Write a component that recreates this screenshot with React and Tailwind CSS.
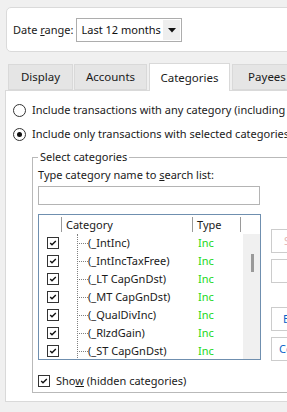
const rows = [
  '(_IntInc)',
  '(_IntIncTaxFree)',
  '(_LT CapGnDst)',
  '(_MT CapGnDst)',
  '(_QualDivInc)',
  '(_RlzdGain)',
  '(_ST CapGnDst)',
]

function Check({ checked = true }) {
  return (
    <span className="w-[12px] h-[12px] border border-[#333333] bg-white flex items-center justify-center shrink-0">
      {checked && (
        <svg width="8" height="8" viewBox="0 0 8 8">
          <path d="M1.2 4 L3 5.8 L6.8 2" fill="none" stroke="#111" strokeWidth="1.4" />
        </svg>
      )}
    </span>
  )
}

function Radio({ checked }) {
  return (
    <span className="w-[13px] h-[13px] rounded-full border border-[#333333] bg-white flex items-center justify-center shrink-0">
      {checked && <span className="w-[5px] h-[5px] rounded-full bg-[#111]" />}
    </span>
  )
}

function Tab({ label, width, active, gap = 0 }) {
  return active ? (
    <div
      className="h-[28px] -mb-px bg-white border border-b-0 border-[#d9d9d9] flex items-center justify-center relative z-10 shrink-0"
      style={{ width, marginLeft: gap }}
    >
      {label}
    </div>
  ) : (
    <div
      className="h-[26px] bg-[#e5e5e5] border border-[#d9d9d9] flex items-center justify-center shrink-0"
      style={{ width, marginLeft: gap }}
    >
      {label}
    </div>
  )
}

export default function App() {
  return (
    <div
      className="w-[287px] h-[412px] bg-[#f0f0f0] overflow-hidden text-[11px] text-[#1a1a1a] leading-[16px] whitespace-nowrap"
      style={{ fontFamily: '"Noto Sans", "Open Sans", sans-serif' }}
    >
      {/* date range */}
      <div className="ml-[6px] mt-[7px] w-[300px] h-[45px] bg-white border border-[#dadada] rounded-[5px] flex items-center pl-[6px]">
        <span>
          Date <u>r</u>ange:
        </span>
        <div className="ml-[3px] w-[106px] h-[24px] border border-[#adadad] flex items-center justify-between pl-[4px] pr-[1px] mt-[1px] shrink-0">
          <span className="text-[#111]">Last 12 months</span>
          <span className="w-[17px] h-[20px] bg-[#eeeeee] flex items-center justify-center">
            <svg width="8" height="5" viewBox="0 0 8 5">
              <path d="M0 0 H8 L4 4.5 Z" fill="#111" />
            </svg>
          </span>
        </div>
      </div>

      {/* tabs */}
      <div className="mt-[11px] flex items-end pl-[8px] text-[11.5px]">
        <Tab label="Display" width={65} />
        <Tab label="Accounts" width={73} gap={1} />
        <Tab label="Categories" width={81} gap={2} active />
        <Tab label="Payees" width={70} gap={2} />
      </div>

      {/* content panel */}
      <div className="ml-[5px] w-[300px] h-[312px] bg-white border border-[#d9d9d9] pt-[11px]">
        <div className="flex items-center h-[16px] pl-[7px] gap-[6px]">
          <Radio />
          <span>Include transactions with any category (including uncategorized)</span>
        </div>
        <div className="flex items-center h-[16px] pl-[7px] gap-[6px] mt-[8px]">
          <Radio checked />
          <span>Include only transactions with selected categories</span>
        </div>

        {/* group box */}
        <div className="relative ml-[26px] mt-[15px] w-[290px] h-[236px] border border-[#b9b9b9] pl-[5px] pt-[9px]">
          <span className="absolute -top-[9px] left-[5px] bg-white px-[2px] leading-[16px]">Select categories</span>
          <div className="h-[16px]">
            Type category name to <u>s</u>earch list:
          </div>
          <div className="mt-[3px] w-[222px] h-[19px] border border-[#b4b4b4] bg-white" />

          <div className="flex mt-[9px]">
            {/* list */}
            <div className="w-[223px] h-[146px] border border-[#6f8faf] bg-white overflow-hidden shrink-0">
              <div className="flex h-[19px] items-center">
                <div className="w-[23px] h-[15px] border-r border-[#9a9a9a] shrink-0" />
                <div className="w-[131px] h-[15px] border-r border-[#9a9a9a] pl-[4px] flex items-center shrink-0">
                  Category
                </div>
                <div className="w-[48px] h-[15px] border-r border-[#9a9a9a] pl-[4px] flex items-center shrink-0">
                  Type
                </div>
              </div>
              <div className="flex">
                <div className="w-[204px] relative shrink-0">
                  <div className="absolute left-[38px] top-0 bottom-0 border-l border-dotted border-[#808080]" />
                  {rows.map((r) => (
                    <div key={r} className="flex items-center h-[18px]">
                      <div className="w-[23px] pl-[8px] flex items-center shrink-0">
                        <Check />
                      </div>
                      <div className="w-[131px] flex items-center shrink-0">
                        <span className="ml-[15px] w-[11px] border-t border-dotted border-[#808080]" />
                        <span>{r}</span>
                      </div>
                      <div className="pl-[5px] text-[#22d822]">Inc</div>
                    </div>
                  ))}
                </div>
                <div className="w-[17px] h-[126px] bg-[#f0f0f0] relative shrink-0">
                  <div className="absolute left-[8px] top-[20px] w-[3px] h-[18px] bg-[#9a9a9a]" />
                </div>
              </div>
            </div>

            {/* buttons */}
            <div className="ml-[10px] -mt-[1px] flex flex-col shrink-0">
              <div className="mt-[16px] w-[80px] h-[24px] border border-[#cccccc] bg-white flex items-center pl-[12px] text-[#e0b8b8]">
                Select All
              </div>
              <div className="mt-[6px] w-[80px] h-[24px] border border-[#cccccc] bg-white" />
              <div className="mt-[24px] w-[80px] h-[24px] border border-[#cccccc] bg-white flex items-center pl-[11px] text-[#0a64c8]">
                Expand All
              </div>
              <div className="mt-[6px] w-[80px] h-[24px] border border-[#cccccc] bg-white flex items-center pl-[7px] text-[#0a64c8]">
                Collapse All
              </div>
            </div>
          </div>

          <div className="flex items-center gap-[6px] mt-[12px] h-[16px]">
            <Check />
            <span>
              Sho<u>w</u> (hidden categories)
            </span>
          </div>
        </div>
      </div>
    </div>
  )
}
